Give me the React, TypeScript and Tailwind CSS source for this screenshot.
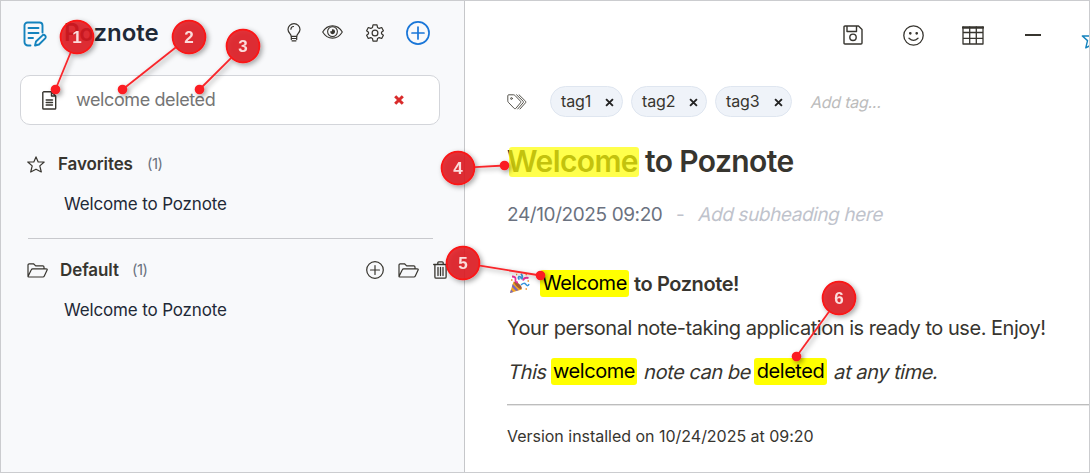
import React from "react";

type IconProps = { w: number; h: number; className?: string; sw?: number; children: React.ReactNode };

function Icon({ w, h, className = "", sw = 1.2, children }: IconProps) {
  return (
    <svg
      width={w}
      height={h}
      viewBox={`0 0 ${w} ${h}`}
      fill="none"
      stroke="currentColor"
      strokeWidth={sw}
      strokeLinecap="round"
      strokeLinejoin="round"
      className={`block shrink-0 ${className}`}
    >
      {children}
    </svg>
  );
}

function NoteLogo() {
  return (
    <Icon w={24} h={26} sw={1.9} className="text-[#1583bd]">
      <path d="M7.500 24.500H5A3.500 3.500 0 0 1 1.500 21V4.500A3 3 0 0 1 4.500 1.500H16.500A3 3 0 0 1 19.500 4.500V11.500" />
      <path d="M5.500 7H15.500M5.500 12H15.500M5.500 17H10" />
      <path d="M12 24.500L13 20.500L19.200 14.600A1.900 1.900 0 0 1 22.200 17.300L16 23.500Z" />
    </Icon>
  );
}

function Bulb() {
  return (
    <Icon w={14} h={19}>
      <path d="M4.200 13.300C4.200 10.800 1 9.700 1 6.500A6 5.800 0 0 1 13 6.500C13 9.700 9.800 10.800 9.800 13.300Z" />
      <path d="M4.500 15.500H9.500M5 17.800H9M4.300 13.500V16.500M9.700 13.500V16.500M3.900 6.200A2.800 2.800 0 0 1 6.500 3.500" />
    </Icon>
  );
}

function Eye() {
  return (
    <Icon w={21} h={14} sw={1.1}>
      <path d="M.7 7C5.500-1.200 15.500-1.200 20.300 7C15.500 15.200 5.500 15.200.7 7Z" />
      <circle cx="10.500" cy="6.600" r="4.900" />
      <path d="M10.500 4.800A1.900 1.900 0 1 1 8.700 6.800H10.500Z" fill="currentColor" />
    </Icon>
  );
}

function Gear() {
  return (
    <Icon w={18} h={18}>
      <path d="M7 .8H11L11.500 3.400L13.200 4.400L15.700 3.500L17.400 6.800L15.500 8.200V9.800L17.400 11.200L15.700 14.500L13.200 13.600L11.500 14.600L11 17.200H7L6.500 14.600L4.800 13.600L2.300 14.500L.6 11.200L2.500 9.800V8.200L.6 6.800L2.300 3.500L4.800 4.400L6.500 3.400Z" />
      <circle cx="9" cy="9" r="2.900" />
    </Icon>
  );
}

function PlusCircle({ size, className = "", sw }: { size: number; className?: string; sw: number }) {
  const c = size / 2;
  const arm = size / 4;
  return (
    <Icon w={size} h={size} sw={sw} className={className}>
      <circle cx={c} cy={c} r={c - sw / 2 - 0.1} />
      <path d={`M${c - arm} ${c}H${c + arm}M${c} ${c - arm}V${c + arm}`} />
    </Icon>
  );
}

function FileIcon() {
  return (
    <Icon w={15} h={19} sw={1.4}>
      <path d="M1.700.8H9.500L13.700 5V17.200Q13.700 18 12.900 18H1.600Q.8 18 .8 17.200V1.500ZM9.500.8V5H13.700M4.200 9H10.500M4.200 11.500H10.500M4.200 14H10.500" />
    </Icon>
  );
}

function Star({ w = 18, h = 17, className = "" }: { w?: number; h?: number; className?: string }) {
  return (
    <svg width={w} height={h} viewBox="0 0 18 17" fill="none" stroke="currentColor" strokeWidth="1.200" strokeLinejoin="round" className={`block shrink-0 ${className}`}>
      <path d="M9 .9L11.200 6H17.200L12.800 9.900L14.300 16L9 13.200L3.700 16L5.200 9.900L.8 6H6.800Z" />
    </svg>
  );
}

function Folder() {
  return (
    <Icon w={21} h={15}>
      <path d="M1 13.500V1.900A1.200 1.200 0 0 1 2.200.8H6.500L8.700 2.900H15.800A1.200 1.200 0 0 1 17 4.100V5.800M1 13.500L4.300 6.700Q4.700 5.800 5.700 5.800H19Q20.700 5.800 20 7.200L17.300 13Q16.900 14 15.900 14H1.700Q1 14 1 13.500Z" />
    </Icon>
  );
}

function Trash() {
  return (
    <Icon w={15} h={18} sw={1.3}>
      <path d="M.7 3.500H14.300M4.800 3.200V1.800Q4.800.8 5.800.8H9.200Q10.200.8 10.200 1.800V3.200M1.900 3.700V16Q1.900 17.200 3.100 17.200H11.900Q13.100 17.200 13.100 16V3.700M5 6.300V14.500M7.500 6.300V14.500M10 6.300V14.500" />
    </Icon>
  );
}

function Tags() {
  return (
    <Icon w={20} h={16} sw={1} className="text-[#55534c]">
      <path d="M.8 1.600Q.8.800 1.600.800H6.700Q7.300.800 7.800 1.300L13.600 7.300Q14.200 8 13.600 8.700L8.700 14.500Q8 15.200 7.300 14.500L1.300 8.300Q.8 7.800.8 7.200ZM9.600.8L16.200 7.300Q16.800 8 16.200 8.700L10.700 15M12 .8L18.600 7.300Q19.200 8 18.600 8.700L13 15" />
      <circle cx="4.500" cy="4.500" r=".9" />
    </Icon>
  );
}

function Save() {
  return (
    <Icon w={20} h={20} sw={1.4}>
      <path d="M2 1H15.500L19 4.500V18Q19 19 18 19H2Q1 19 1 18V2Q1 1 2 1ZM4 1V6.500H13.500V1" />
      <circle cx="10" cy="12.300" r="3.200" />
    </Icon>
  );
}

function Smile() {
  return (
    <Icon w={21} h={21} sw={1.3}>
      <circle cx="10.500" cy="10.500" r="9.700" />
      <path d="M6 13.300Q10.500 17.500 15 13.300" />
      <circle cx="7.300" cy="8.300" r=".7" fill="currentColor" />
      <circle cx="13.700" cy="8.300" r=".7" fill="currentColor" />
    </Icon>
  );
}

function Table() {
  return (
    <Icon w={22} h={19} sw={1.3}>
      <path d="M1 1.500H21" strokeWidth="2.400" />
      <path d="M1 1V18H21V1M1 6.500H21M1 12.300H21M7.700 1V18M14.300 1V18" />
    </Icon>
  );
}

function Cross({ size, sw, className = "" }: { size: number; sw: number; className?: string }) {
  return (
    <svg width={size} height={size} viewBox="0 0 10 10" fill="none" stroke="currentColor" strokeWidth={sw} className={`block shrink-0 ${className}`}>
      <path d="M1.200 1.200L8.800 8.800M8.800 1.200L1.200 8.800" />
    </svg>
  );
}

function Party() {
  return (
    <svg width="21" height="21" viewBox="0 0 21 21" fill="none" className="block shrink-0">
      <path d="M1 20L4.500 8.500C8.500 9.500 12 13 12.800 16.500Z" fill="#f5a623" />
      <path d="M3.700 11L9.500 17.300L7 18L2.900 13.700ZM2 16.500L4.400 19L1 20Z" fill="#7a68b8" />
      <ellipse cx="9" cy="12.200" rx="5" ry="1.700" transform="rotate(45 9 12.200)" fill="#a35a33" />
      <path d="M10.500 6.500Q8.500 5 10 3.500Q12 3.500 12.500 6M12.500 6.500Q14.500 4 12 .8" stroke="#3a96dd" strokeWidth="1.700" />
      <path d="M12 12Q15 9 17 11.500T20 11" stroke="#3a96dd" strokeWidth="1.500" />
      <path d="M14 7.500Q15 4 19.500 5M3 3.500Q7 3.500 6.500 6.500T9 9.500" stroke="#e8309a" strokeWidth="1.800" />
      <path d="M2 7H3.500M16.500 1.500H18M16.500 16H18M7 1.500H8.200M18.500 8H20" stroke="#f0932b" strokeWidth="1.500" />
    </svg>
  );
}

function Slant({ children, className = "" }: { children: React.ReactNode; className?: string }) {
  return <span className={`inline-block origin-[50%_75%] [transform:skewX(-13deg)] ${className}`}>{children}</span>;
}

function Tag({ label, className }: { label: string; className: string }) {
  return (
    <div className={`flex h-[31px] shrink-0 items-center justify-between rounded-full border border-[#dfe6f0] bg-[#eff3f9] pr-[8px] pl-[10px] text-base ${className}`}>
      <span className="-mt-[2px] tracking-[-0.1px]">{label}</span>
      <Cross size={9} sw={2.1} className="mt-[2px] text-[#222]" />
    </div>
  );
}

function Section({ icon, name, nameClass, countClass, actions }: { icon: React.ReactNode; name: string; nameClass: string; countClass: string; actions?: React.ReactNode }) {
  return (
    <div className="flex h-6 items-center">
      {icon}
      <span className={`pt-[2px] text-[17px] font-semibold tracking-[-0.1px] ${nameClass}`}>{name}</span>
      <span className={`text-[15px] tracking-[-0.5px] text-[#6b7280] ${countClass}`}>(1)</span>
      {actions}
    </div>
  );
}

function Mark({ children, className = "" }: { children: React.ReactNode; className?: string }) {
  return <mark className={`flex h-[27px] shrink-0 items-center justify-center rounded-[3px] bg-[#ffff00] pb-px font-normal text-black ${className}`}>{children}</mark>;
}

const markers = [
  { n: 1, x: 77, y: 37, dx: 55.5, dy: 89.5 },
  { n: 2, x: 189, y: 37, dx: 122.5, dy: 89.5 },
  { n: 3, x: 243, y: 46, dx: 199.5, dy: 89.5 },
  { n: 4, x: 458, y: 168, dx: 504.5, dy: 165.5 },
  { n: 5, x: 463, y: 263, dx: 540.5, dy: 275.5 },
  { n: 6, x: 839, y: 298, dx: 796.5, dy: 356.5 },
];

function Markers() {
  return (
    <svg width="1090" height="473" viewBox="0 0 1090 473" className="pointer-events-none absolute -top-px -left-px">
      <defs>
        <filter id="shade" filterUnits="userSpaceOnUse" x="0" y="0" width="1090" height="473">
          <feDropShadow dx="2" dy="2" stdDeviation="2.500" floodColor="#000" floodOpacity=".38" />
        </filter>
      </defs>
      {markers.map((m) => {
        const len = Math.hypot(m.dx - m.x, m.dy - m.y);
        const sx = m.x + ((m.dx - m.x) / len) * 17;
        const sy = m.y + ((m.dy - m.y) / len) * 17;
        return (
          <g key={m.n} filter="url(#shade)">
            <line x1={sx} y1={sy} x2={m.dx} y2={m.dy} stroke="#f8262b" strokeWidth="1.800" />
            <circle cx={m.dx} cy={m.dy} r="4.800" fill="#fb1d22" />
            <circle cx={m.x} cy={m.y} r="16.400" fill="#e0191d" fillOpacity=".86" stroke="#fb1317" strokeWidth="1.800" />
            <text x={m.x} y={m.y + 6} textAnchor="middle" fill="#fbdcdc" className="font-['Liberation_Sans',sans-serif] text-[17px] font-bold">
              {m.n}
            </text>
          </g>
        );
      })}
    </svg>
  );
}

export default function App() {
  return (
    <div className="relative flex h-[473px] w-[1090px] overflow-hidden border border-[#cbcccf] bg-white font-['Inter',sans-serif] whitespace-nowrap text-[#37352f]">
      <aside className="flex w-[464px] shrink-0 flex-col border-r border-[#c6c7ca] bg-[#f8f9fb]">
        <header className="flex h-[64px] items-center pl-[22px]">
          <span className="pt-px"><NoteLogo /></span>
          <h1 className="ml-[17px] w-[223px] text-[24px] font-semibold text-[#1f2937]">Poznote</h1>
          <span className="-mt-[2px]"><Bulb /></span>
          <span className="-mt-[2px] ml-[21px]"><Eye /></span>
          <span className="-mt-px ml-[23px]"><Gear /></span>
          <PlusCircle size={24} sw={1.7} className="ml-[22px] text-[#1976d8]" />
        </header>
        <div className="mt-[10px] ml-[19px] flex h-[50px] w-[420px] items-center rounded-[10px] border border-[#d3d5da] bg-white pl-[21px]">
          <FileIcon />
          <span className="ml-[19px] w-[318px] pb-px text-[18px] tracking-[-0.4px] text-[#757575]">welcome deleted</span>
          <Cross size={10} sw={3} className="text-[#d92b2b]" />
        </div>
        <div className="mt-[27px] ml-[26px]">
          <Section icon={<Star />} name="Favorites" nameClass="ml-[13px] w-[75px]" countClass="ml-[14px]" />
        </div>
        <p className="mt-[16px] ml-[63px] h-6 text-[17px] leading-6 tracking-[-0.15px] text-[#1f2937]">Welcome to Poznote</p>
        <div className="mt-[22px] ml-[27px] h-px w-[405px] bg-[#c8c9cd]" />
        <div className="mt-[19px] ml-[26px]">
          <Section
            icon={<Folder />}
            name="Default"
            nameClass="ml-[12px] w-[59px]"
            countClass="ml-[13px] w-[234px]"
            actions={
              <>
                <PlusCircle size={18} sw={1.2} />
                <span className="ml-[14px]"><Folder /></span>
                <span className="ml-[14px]"><Trash /></span>
              </>
            }
          />
        </div>
        <p className="mt-[16px] ml-[63px] h-6 text-[17px] leading-6 tracking-[-0.15px] text-[#1f2937]">Welcome to Poznote</p>
      </aside>

      <main className="flex min-w-0 flex-1 flex-col overflow-hidden pl-[42px]">
        <div className="flex h-[68px] items-center pl-[336px]">
          <Save />
          <span className="ml-[40px]"><Smile /></span>
          <span className="ml-[38px]"><Table /></span>
          <span className="ml-[41px] h-[2px] w-4 shrink-0 bg-[#37352f]" />
          <Star w={22} h={20} className="mt-[7px] ml-[40px] text-[#1583bd]" />
        </div>
        <div className="mt-[17px] flex h-[31px] items-center">
          <Tags />
          <Tag label="tag1" className="ml-[23px] w-[73px]" />
          <Tag label="tag2" className="ml-[8px] w-[76px]" />
          <Tag label="tag3" className="ml-[8px] w-[77px]" />
          <Slant className="ml-[18px] text-base tracking-[-0.25px] text-[#bcbcbc]">Add tag...</Slant>
        </div>
        <h2 className="relative mt-[24px] h-10 text-[30px] leading-10 font-semibold tracking-[-0.6px]">
          Welcome to Poznote
          <span className="absolute top-[6px] left-[2px] h-[30px] w-[130px] rounded-[3px] bg-[#ffff00]/70" />
        </h2>
        <div className="mt-[21px] flex h-[26px] items-center text-[19px]">
          <span className="w-[169px] tracking-[-0.4px] text-[#6b7280]">24/10/2025 09:20</span>
          <span className="w-[21px] text-[#bfc3cc]">-</span>
          <Slant className="tracking-[-0.42px] text-[#bfc3cc]">Add subheading here</Slant>
        </div>
        <div className="mt-[42px] flex h-[27px] items-center text-[20px] font-semibold tracking-[-0.4px]">
          <span className="ml-[2px]"><Party /></span>
          <Mark className="ml-[10px] w-[89px]">Welcome</Mark>
          <span className="ml-[5px]">to Poznote!</span>
        </div>
        <p className="mt-[18px] h-[27px] text-[20px] leading-[27px] tracking-[-0.47px]">Your personal note-taking application is ready to use. Enjoy!</p>
        <div className="mt-[16px] flex h-[27px] items-center text-[20px] tracking-[-0.45px]">
          <span className="w-[44px]"><Slant>This</Slant></span>
          <Mark className="w-[86px]">welcome</Mark>
          <span className="ml-[6px] w-[111px]"><Slant>note can be</Slant></span>
          <Mark className="w-[73px]">deleted</Mark>
          <span className="ml-[6px]"><Slant>at any time.</Slant></span>
        </div>
        <div className="mt-[19px] h-[2px] shrink-0 border-t border-b border-t-[#bdbdbd] border-b-[#e6e6e6]" />
        <p className="mt-[18px] h-6 text-[16px] leading-6 tracking-[-0.02px]">Version installed on 10/24/2025 at 09:20</p>
      </main>
      <Markers />
    </div>
  );
}
